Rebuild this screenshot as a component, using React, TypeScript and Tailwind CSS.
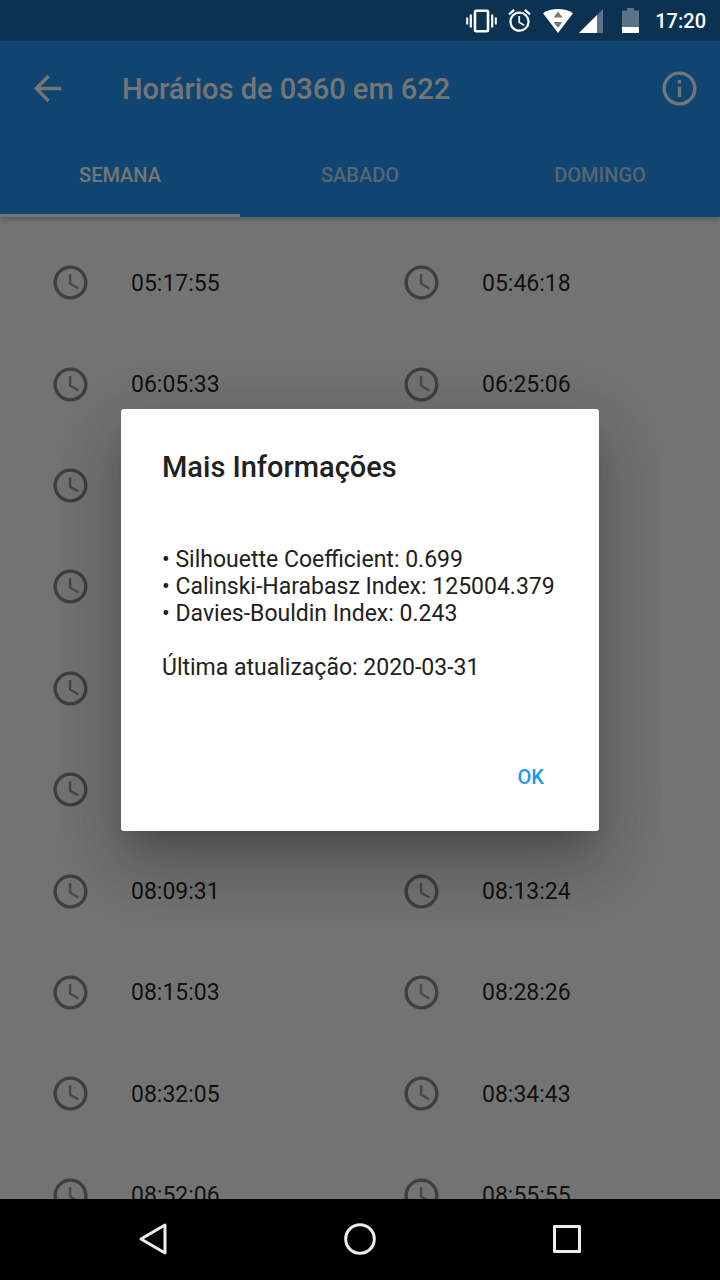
import React from "react";

const TIMES: string[] = [
  "05:17:55", "05:46:18",
  "06:05:33", "06:25:06",
  "06:38:12", "06:51:40",
  "07:02:27", "07:15:09",
  "07:24:51", "07:36:14",
  "07:48:30", "07:59:02",
  "08:09:31", "08:13:24",
  "08:15:03", "08:28:26",
  "08:32:05", "08:34:43",
  "08:52:06", "08:55:55",
];

const TABS = ["SEMANA", "SABADO", "DOMINGO"];

function StatusBar() {
  return (
    <div className="flex h-[41px] shrink-0 items-center justify-end bg-[#0b3351] pr-[14px] text-white">
      <svg className="mr-[9px] h-8 w-8" viewBox="0 0 32 32" fill="none" stroke="currentColor" aria-hidden="true">
        <rect x="10" y="5.8" width="13" height="20.4" rx="1.2" strokeWidth="2.6" />
        <path d="M5.800 9.500v13M27.200 9.500v13" strokeWidth="2.2" />
        <path d="M2.200 12.500v7M30.800 12.500v7" strokeWidth="2" />
      </svg>
      <svg className="mr-[10px] h-[27px] w-[27px]" viewBox="0 0 24 24" fill="currentColor" aria-hidden="true">
        <path d="M22 5.720l-4.600-3.860-1.290 1.530 4.600 3.860L22 5.720zM7.880 3.390L6.600 1.860 2 5.710l1.290 1.530 4.590-3.850zM12.500 8H11v6l4.750 2.850.750-1.230-4-2.370V8zM12 4c-4.970 0-9 4.030-9 9s4.020 9 9 9a9 9 0 0 0 0-18zm0 16c-3.870 0-7-3.130-7-7s3.130-7 7-7 7 3.130 7 7-3.130 7-7 7z" />
      </svg>
      <svg className="mr-[6px] h-6 w-[30px]" viewBox="0 0 30 24" aria-hidden="true">
        <path d="M15 24L0 4.200C4.300 1.200 9.400 0 15 0s10.700 1.200 15 4.200z" fill="white" />
        <path d="M15 2.500l4.500 6h-9zM15 19l-4.500-6h9z" fill="#777" />
      </svg>
      <svg className="mr-[19px] h-6 w-6" viewBox="0 0 24 24" aria-hidden="true">
        <path d="M24 0v24H0z" fill="#5a7388" />
        <path d="M18 6v18H0z" fill="white" />
      </svg>
      <svg className="mr-4 h-[25px] w-[17px]" viewBox="0 0 17 25" aria-hidden="true">
        <path d="M5 0h7v2.500h5V25H0V2.500h5z" fill="#5a7388" />
        <path d="M0 19h17v6H0z" fill="white" />
      </svg>
      <time className="text-[20px] font-medium leading-6">17:20</time>
    </div>
  );
}

function AppBar() {
  return (
    <header className="relative h-[176px] shrink-0 bg-[#2196f3] text-white shadow-[0_2px_6px_rgba(0,0,0,0.25)]">
      <div className="flex h-[95px] items-center pl-[27px] pr-5">
        <button type="button" aria-label="Voltar" className="mr-[54px]">
          <svg className="h-[41px] w-[41px]" viewBox="0 0 24 24" fill="currentColor" aria-hidden="true">
            <path d="M20 11H7.830l5.590-5.590L12 4l-8 8 8 8 1.410-1.410L7.830 13H20v-2z" />
          </svg>
        </button>
        <h1 className="flex-1 text-[29px] font-medium leading-[34px]">Horários de 0360 em 622</h1>
        <button type="button" aria-label="Mais informações">
          <svg className="h-[41px] w-[41px]" viewBox="0 0 24 24" fill="currentColor" aria-hidden="true">
            <path d="M11 17h2v-6h-2v6zm1-15C6.480 2 2 6.480 2 12s4.480 10 10 10 10-4.480 10-10S17.520 2 12 2zm0 18c-4.410 0-8-3.590-8-8s3.590-8 8-8 8 3.590 8 8-3.590 8-8 8zM11 9h2V7h-2v2z" />
          </svg>
        </button>
      </div>
      <nav className="grid h-[81px] grid-cols-3" role="tablist">
        {TABS.map((tab, i) => (
          <button
            key={tab}
            type="button"
            role="tab"
            aria-selected={i === 0}
            className={
              i === 0
                ? "border-b-3 border-white text-[20px] font-medium"
                : "border-b-3 border-transparent text-[20px] font-medium text-white/70"
            }
          >
            {tab}
          </button>
        ))}
      </nav>
    </header>
  );
}

function TimeList() {
  return (
    <main className="flex min-h-0 flex-1 flex-col overflow-hidden pl-[10px] pr-2 pt-[15px]">
      <ul className="-mb-[47px] grid flex-1 auto-rows-fr grid-cols-2">
        {TIMES.map((time) => (
          <li key={time} className="flex items-center gap-10 pl-10">
            <svg className="h-[41px] w-[41px] text-black" viewBox="0 0 24 24" fill="currentColor" aria-hidden="true">
              <path opacity="0.45" d="M11.990 2C6.470 2 2 6.480 2 12s4.470 10 9.990 10C17.520 22 22 17.520 22 12S17.520 2 11.990 2zM12 20c-4.420 0-8-3.580-8-8s3.580-8 8-8 8 3.580 8 8-3.580 8-8 8z" />
              <path opacity="0.36" d="M12.500 7H11v6l5.250 3.150.750-1.230-4.500-2.670z" />
            </svg>
            <span className="pt-0.5 text-[23px] leading-7 text-black/87">{time}</span>
          </li>
        ))}
      </ul>
    </main>
  );
}

function InfoDialog() {
  return (
    <div className="absolute inset-0 flex items-center justify-center bg-black/54 px-[121px]">
      <div
        role="dialog"
        aria-modal="true"
        aria-labelledby="info-title"
        className="w-full rounded-[3px] bg-white text-[#212121] shadow-[0_19px_26px_-12px_rgba(0,0,0,0.2),0_41px_64px_5px_rgba(0,0,0,0.14),0_15px_78px_14px_rgba(0,0,0,0.12)]"
      >
        <h2 id="info-title" className="px-[41px] pt-[41px] text-[29px] font-medium leading-[34px]">
          Mais Informações
        </h2>
        <div className="whitespace-nowrap px-[41px] pt-[62px] text-[23px] leading-[27px]">
          <ul>
            <li>• Silhouette Coefficient: 0.699</li>
            <li>• Calinski-Harabasz Index: 125004.379</li>
            <li>• Davies-Bouldin Index: 0.243</li>
          </ul>
          <p className="pt-[27px]">Última atualização: 2020-03-31</p>
        </div>
        <div className="flex justify-end px-[14px] pb-[14px] pt-[55px]">
          <button type="button" className="h-[81px] px-[41px] text-[20px] font-medium text-[#2196f3]">
            OK
          </button>
        </div>
      </div>
    </div>
  );
}

function NavigationBar() {
  return (
    <footer className="flex h-[81px] shrink-0 items-center justify-center gap-[167px] bg-black pb-0.5 text-[#eee]">
      <button type="button" aria-label="Voltar">
        <svg className="h-10 w-10" viewBox="0 0 40 40" fill="none" stroke="currentColor" strokeWidth="3" strokeLinejoin="round" aria-hidden="true">
          <path d="M32 6v28L8 20z" />
        </svg>
      </button>
      <button type="button" aria-label="Início">
        <svg className="h-10 w-10" viewBox="0 0 40 40" fill="none" stroke="currentColor" strokeWidth="3" aria-hidden="true">
          <circle cx="20" cy="20" r="14.300" />
        </svg>
      </button>
      <button type="button" aria-label="Recentes">
        <svg className="h-10 w-10" viewBox="0 0 40 40" fill="none" stroke="currentColor" strokeWidth="3" strokeLinejoin="round" aria-hidden="true">
          <rect x="7.500" y="7.500" width="25" height="25" />
        </svg>
      </button>
    </footer>
  );
}

export default function App() {
  return (
    <div className="flex h-screen flex-col overflow-hidden font-['Roboto',sans-serif]">
      <StatusBar />
      <div className="relative flex min-h-0 flex-1 flex-col overflow-hidden bg-[#fafafa]">
        <AppBar />
        <TimeList />
        <InfoDialog />
      </div>
      <NavigationBar />
    </div>
  );
}
